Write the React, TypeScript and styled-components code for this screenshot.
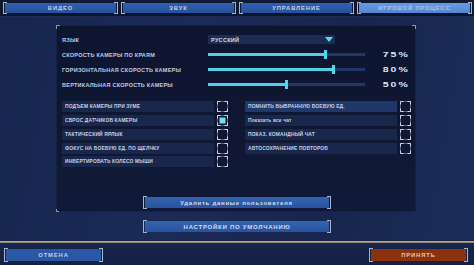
import React from "react";
import styled, { createGlobalStyle, css } from "styled-components";

const Global = createGlobalStyle`
  html, body { margin: 0; padding: 0; background: #0e172e; }
  * { box-sizing: border-box; }
`;

const FONT = `"Liberation Sans", "DejaVu Sans", Arial, sans-serif`;

const Screen = styled.div`
  width: 474px;
  height: 265px;
  overflow: hidden;
  display: flex;
  flex-direction: column;
  font-family: ${FONT};
  background: linear-gradient(100deg, #16264f 0%, #1a2b56 40%, #17264e 70%, #1b2d58 100%);
`;

const TopBar = styled.div`
  height: 17px;
  padding: 2px 2px 0 3px;
  background: linear-gradient(#101a34, #0c152b);
  border-bottom: 1px solid #1e2c50;
  display: grid;
  grid-template-columns: repeat(4, 1fr);
  column-gap: 3px;
  align-items: start;
`;

const bracketed = css`
  position: relative;
  padding: 1px 2px;
  background-clip: content-box;
  border: none;
  font-family: ${FONT};
  font-weight: bold;
  text-transform: uppercase;
  display: flex;
  align-items: center;
  justify-content: center;
  &::before, &::after {
    content: "";
    position: absolute;
    top: 0;
    bottom: 0;
    width: 3px;
    border: 1px solid #aab4c6;
  }
  &::before { left: 0; border-right: none; }
  &::after { right: 0; border-left: none; }
`;

const Tab = styled.div<{ $active?: boolean }>`
  ${bracketed};
  height: 12px;
  font-size: 5.8px;
  letter-spacing: 0.9px;
  color: ${(p) => (p.$active ? "#a9c4ee" : "#c3d0ea")};
  background-color: ${(p) => (p.$active ? "#5a8fdc" : "#2956a4")};
  background-image: ${(p) =>
    p.$active
      ? "linear-gradient(#6a9ce4, #4f86d4)"
      : "linear-gradient(#3162b0, #23509c)"};
`;

const Main = styled.div`
  flex: 1;
  display: flex;
  flex-direction: column;
  padding-top: 8px;
`;

const Panel = styled.div`
  position: relative;
  margin-left: 56px;
  width: 360px;
  height: 187px;
  background: linear-gradient(#0d1530, #0f1733 60%, #101a38);
  border: 1px solid #17223f;
  padding: 6px 5px 2px 5px;
  display: flex;
  flex-direction: column;
  &::before {
    content: "";
    position: absolute;
    left: -1px;
    top: -1px;
    width: 3px;
    height: 3px;
    border-left: 1px solid #8a96ae;
    border-top: 1px solid #8a96ae;
  }
  &::after {
    content: "";
    position: absolute;
    right: -1px;
    top: -1px;
    width: 3px;
    height: 3px;
    border-right: 1px solid #8a96ae;
    border-top: 1px solid #8a96ae;
  }
`;

const CornerBL = styled.span`
  position: absolute;
  left: -1px;
  bottom: -1px;
  width: 3px;
  height: 3px;
  border-left: 1px solid #8a96ae;
  border-bottom: 1px solid #8a96ae;
`;

const SettingRow = styled.div`
  height: 15px;
  display: flex;
  align-items: center;
`;

const RowLabel = styled.div`
  width: 146px;
  flex: none;
  font-size: 5.5px;
  font-weight: bold;
  letter-spacing: 0.25px;
  color: #c4cde0;
  white-space: nowrap;
`;

const Dropdown = styled.div`
  width: 127px;
  height: 9px;
  background: #1d2c52;
  display: flex;
  align-items: center;
  justify-content: space-between;
  padding: 0 2px 0 3px;
  font-size: 5.5px;
  font-weight: bold;
  letter-spacing: 0.3px;
  color: #d3dbea;
`;

const Track = styled.div`
  position: relative;
  width: 157px;
  height: 3px;
  background: #233764;
`;

const Fill = styled.div`
  height: 100%;
  background: #4fd2e4;
`;

const Handle = styled.div`
  position: absolute;
  top: -3px;
  width: 3px;
  height: 9px;
  margin-left: -1.5px;
  background: #52d6e8;
`;

const Value = styled.div`
  flex: 1;
  text-align: right;
  font-size: 7px;
  font-weight: bold;
  color: #dfe5f0;
  letter-spacing: 1.4px;
  transform: scaleX(1.5);
  transform-origin: right center;
  white-space: nowrap;
`;

const CheckGrid = styled.div`
  margin-top: 8px;
  display: grid;
  grid-template-columns: 166px 166px;
  column-gap: 17px;
`;

const CheckColumn = styled.div`
  display: flex;
  flex-direction: column;
`;

const CheckRow = styled.div`
  height: 13.75px;
  display: flex;
  align-items: center;
  gap: 3px;
`;

const CheckBar = styled.div<{ $hover?: boolean }>`
  flex: 1;
  height: 11px;
  background: ${(p) => (p.$hover ? "#223769" : "#19274d")};
  display: flex;
  align-items: center;
  padding-left: 3px;
  font-size: 4.9px;
  font-weight: bold;
  letter-spacing: 0.15px;
  color: #c9d1e2;
  white-space: nowrap;
  overflow: hidden;
`;

const BoxSvg = styled.svg`
  flex: none;
  display: block;
`;

const WideButton = styled.div`
  ${bracketed};
  align-self: center;
  width: 188px;
  height: 13px;
  font-size: 6px;
  letter-spacing: 0.75px;
  color: #d2ddf0;
  background-color: #2c5aa6;
  background-image: linear-gradient(#3565b2, #27529c);
`;

const PanelButton = styled(WideButton)`
  margin-top: auto;
  text-transform: none;
  margin-left: 1px;
`;

const DefaultButton = styled(WideButton)`
  margin-top: 8px;
`;

const Separator = styled.div`
  height: 3px;
  background: linear-gradient(#1a2648 0 1px, #b9ab94 1px, #8f826f 100%);
`;

const BottomBar = styled.div`
  height: 22px;
  background: linear-gradient(#17244b, #152146);
  display: flex;
  align-items: flex-start;
  justify-content: space-between;
  padding: 5px 6px 0 4px;
`;

const FooterButton = styled.div<{ $accept?: boolean }>`
  ${bracketed};
  width: 99px;
  height: 14px;
  font-size: 5.8px;
  letter-spacing: 0.9px;
  color: ${(p) => (p.$accept ? "#f0c6a8" : "#c3d0ea")};
  background-color: ${(p) => (p.$accept ? "#8a3210" : "#2b58a4")};
`;

function CheckBox({ checked }: { checked?: boolean }) {
  return (
    <BoxSvg width="11" height="11" viewBox="0 0 11 11">
      <rect x="0.5" y="0.5" width="10" height="10" fill="none" stroke="#55627f" strokeWidth="1" />
      <path
        d="M0.5 3.5V0.5H3.5M7.5 0.5H10.5V3.5M10.5 7.5V10.5H7.5M3.5 10.5H0.5V7.5"
        fill="none"
        stroke="#d0d7e4"
        strokeWidth="1"
      />
      {checked && <rect x="2.5" y="2.5" width="6" height="6" fill="#6fe2f2" />}
    </BoxSvg>
  );
}

function Slider({ label, value }: { label: string; value: number }) {
  return (
    <SettingRow>
      <RowLabel>{label}</RowLabel>
      <Track>
        <Fill style={{ width: `${value}%` }} />
        <Handle style={{ left: `${value}%` }} />
      </Track>
      <Value>{value}%</Value>
    </SettingRow>
  );
}

const leftChecks: { label: string; checked?: boolean }[] = [
  { label: "ПОДЪЕМ КАМЕРЫ ПРИ ЗУМЕ" },
  { label: "СБРОС ДАТЧИКОВ КАМЕРЫ", checked: true },
  { label: "ТАКТИЧЕСКИЙ ЯРЛЫК" },
  { label: "ФОКУС НА БОЕВУЮ ЕД. ПО ЩЕЛЧКУ" },
  { label: "ИНВЕРТИРОВАТЬ КОЛЕСО МЫШИ" },
];

const rightChecks: { label: string; hover?: boolean }[] = [
  { label: "ПОМНИТЬ ВЫБРАННУЮ БОЕВУЮ ЕД.", hover: true },
  { label: "Показать все чат" },
  { label: "ПОКАЗ. КОМАНДНЫЙ ЧАТ" },
  { label: "АВТОСОХРАНЕНИЕ ПОВТОРОВ" },
];

export default function App() {
  return (
    <>
      <Global />
      <Screen>
        <TopBar>
          <Tab>Видео</Tab>
          <Tab>Звук</Tab>
          <Tab>Управление</Tab>
          <Tab $active>Игровой процесс</Tab>
        </TopBar>
        <Main>
          <Panel>
            <CornerBL />
            <SettingRow>
              <RowLabel>ЯЗЫК</RowLabel>
              <Dropdown>
                <span>РУССКИЙ</span>
                <svg width="8" height="5" viewBox="0 0 8 5">
                  <path d="M0 0H8L4 5Z" fill="#5fd9ea" />
                </svg>
              </Dropdown>
            </SettingRow>
            <Slider label="СКОРОСТЬ КАМЕРЫ ПО КРАЯМ" value={75} />
            <Slider label="ГОРИЗОНТАЛЬНАЯ СКОРОСТЬ КАМЕРЫ" value={80} />
            <Slider label="ВЕРТИКАЛЬНАЯ СКОРОСТЬ КАМЕРЫ" value={50} />
            <CheckGrid>
              <CheckColumn>
                {leftChecks.map((c) => (
                  <CheckRow key={c.label}>
                    <CheckBar>{c.label}</CheckBar>
                    <CheckBox checked={c.checked} />
                  </CheckRow>
                ))}
              </CheckColumn>
              <CheckColumn>
                {rightChecks.map((c) => (
                  <CheckRow key={c.label}>
                    <CheckBar $hover={c.hover}>{c.label}</CheckBar>
                    <CheckBox />
                  </CheckRow>
                ))}
              </CheckColumn>
            </CheckGrid>
            <PanelButton>Удалить данные пользователя</PanelButton>
          </Panel>
          <DefaultButton>Настройки по умолчанию</DefaultButton>
        </Main>
        <Separator />
        <BottomBar>
          <FooterButton>Отмена</FooterButton>
          <FooterButton $accept>Принять</FooterButton>
        </BottomBar>
      </Screen>
    </>
  );
}
